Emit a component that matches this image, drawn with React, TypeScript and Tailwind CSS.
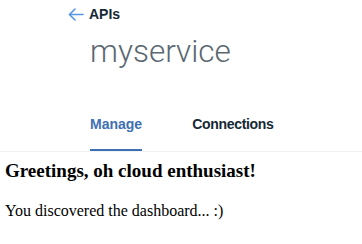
import React from "react";

export default function App() {
  return (
    <div className="w-[362px] h-[244px] bg-white overflow-hidden">
      <div className="pl-[90px] font-['Liberation_Sans',Arial,sans-serif]">
        <a className="flex items-center h-[28px] -ml-[22px] gap-[5px] text-[#152935]">
          <svg width="16" height="13" viewBox="0 0 16 13" fill="none" stroke="#5596e6" strokeWidth="1.6" strokeLinecap="round" strokeLinejoin="round">
            <path d="M15 6.5H1.5" />
            <path d="M7 1L1.5 6.5L7 12" />
          </svg>
          <span className="text-[14px] leading-none font-bold">APIs</span>
        </a>
        <h1 className="mt-2 text-[31.5px] leading-none font-light text-[#5a6872] font-['Roboto',sans-serif]">
          myservice
        </h1>
        <div className="mt-[49px] flex gap-[50px]">
          <div className="text-[14px] leading-none font-bold text-[#3d70b2] pb-[18px] border-b-2 border-[#3d70b2]">Manage</div>
          <div className="text-[14px] leading-none font-bold tracking-[-0.3px] text-[#152935] pb-[18px]">Connections</div>
        </div>
      </div>
      <div className="h-px bg-[#f1f1f5]" />
      <div className="px-[5px] font-['Liberation_Serif','Times_New_Roman',serif] text-black">
        <h2 className="mt-[9px] text-[19px] leading-none font-bold">Greetings, oh cloud enthusiast!</h2>
        <p className="mt-[23px] text-[16px] leading-none">You discovered the dashboard... :)</p>
      </div>
    </div>
  );
}
